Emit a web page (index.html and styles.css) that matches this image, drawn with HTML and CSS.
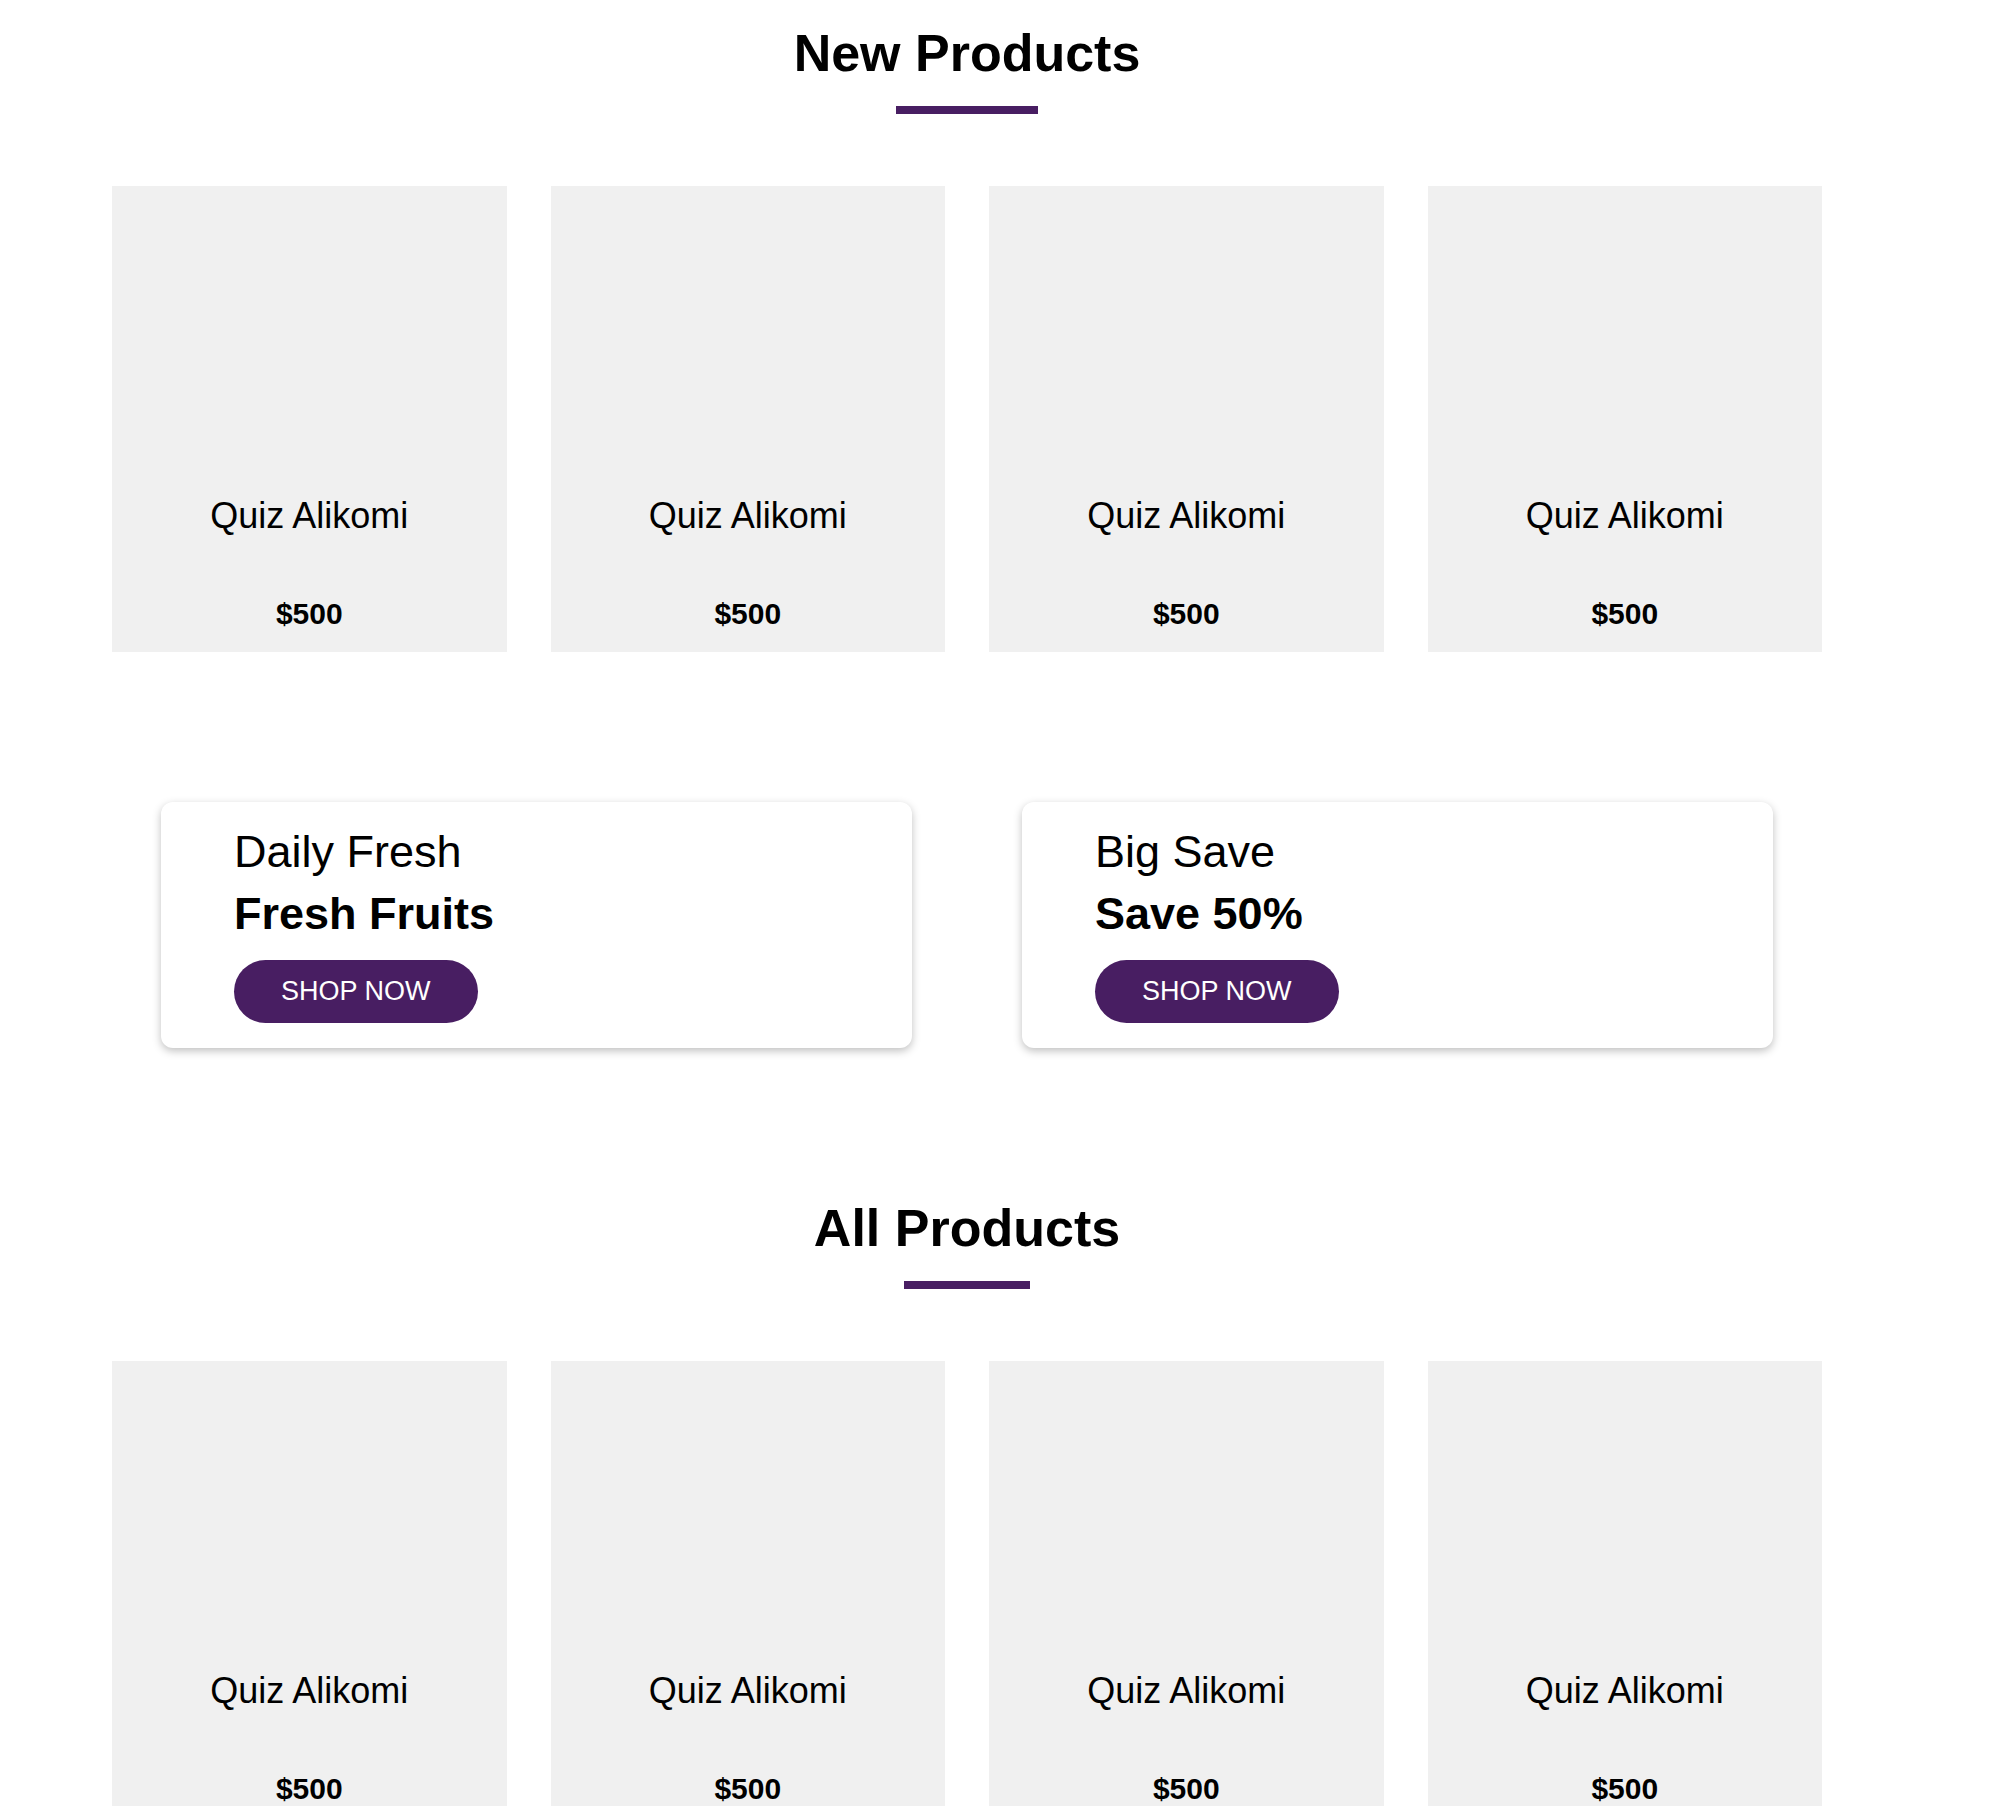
FILE: index.html
```html
<!DOCTYPE html>
<html lang="en">
<head>
<meta charset="utf-8">
<title>Products</title>
<link rel="stylesheet" href="styles.css">
</head>
<body>
<main class="page">
  <section class="section section-new">
    <div class="section-head"><h2 class="section-title">New Products</h2></div>
    <div class="products">
      <article class="product"><div class="product-img"></div><h3 class="product-name">Quiz Alikomi</h3><p class="product-price">$500</p></article>
      <article class="product"><div class="product-img"></div><h3 class="product-name">Quiz Alikomi</h3><p class="product-price">$500</p></article>
      <article class="product"><div class="product-img"></div><h3 class="product-name">Quiz Alikomi</h3><p class="product-price">$500</p></article>
      <article class="product"><div class="product-img"></div><h3 class="product-name">Quiz Alikomi</h3><p class="product-price">$500</p></article>
    </div>
  </section>

  <section class="promos">
    <div class="promo">
      <p class="promo-kicker">Daily Fresh</p>
      <p class="promo-title">Fresh Fruits</p>
      <a class="btn" href="#">Shop Now</a>
    </div>
    <div class="promo">
      <p class="promo-kicker">Big Save</p>
      <p class="promo-title">Save 50%</p>
      <a class="btn" href="#">Shop Now</a>
    </div>
  </section>

  <section class="section section-all">
    <div class="section-head"><h2 class="section-title">All Products</h2></div>
    <div class="products">
      <article class="product"><div class="product-img"></div><h3 class="product-name">Quiz Alikomi</h3><p class="product-price">$500</p></article>
      <article class="product"><div class="product-img"></div><h3 class="product-name">Quiz Alikomi</h3><p class="product-price">$500</p></article>
      <article class="product"><div class="product-img"></div><h3 class="product-name">Quiz Alikomi</h3><p class="product-price">$500</p></article>
      <article class="product"><div class="product-img"></div><h3 class="product-name">Quiz Alikomi</h3><p class="product-price">$500</p></article>
    </div>
  </section>
</main>
</body>
</html>
```

FILE: styles.css
```css
* {
  box-sizing: border-box;
}

body {
  margin: 0;
  background: #ffffff;
  color: #000000;
  font-family: "Liberation Sans", Arial, Helvetica, sans-serif;
}

.page {
  width: 1934px;
}

.section-new {
  padding-top: 23px;
}

.section-all {
  margin-top: 150px;
}

.section-head {
  text-align: center;
}

.section-title {
  display: inline-block;
  margin: 0;
  font-size: 52px;
  line-height: 60px;
  font-weight: 700;
}

.section-title::after {
  content: "";
  display: block;
  width: 41%;
  height: 8px;
  margin: 23px auto 0;
  background: #481e62;
}

.products {
  display: flex;
  gap: 44px;
  padding: 0 112px;
  margin-top: 72px;
}

.product {
  flex: 1;
  height: 466px;
  background: #f0f0f0;
  display: flex;
  flex-direction: column;
  align-items: center;
}

.product-img {
  height: 310px;
  width: 100%;
}

.product-name {
  margin: 0;
  font-size: 36px;
  line-height: 40px;
  font-weight: 400;
}

.product-price {
  margin: 61px 0 0;
  font-size: 30px;
  line-height: 34px;
  font-weight: 700;
}

.promos {
  display: flex;
  gap: 110px;
  padding: 0 161px;
  margin-top: 150px;
}

.promo {
  flex: 1;
  background: #ffffff;
  border-radius: 12px;
  box-shadow: 0 3px 8px rgba(0, 0, 0, 0.25);
  padding: 19px 74px 25px 73px;
}

.promo-kicker,
.promo-title {
  margin: 0;
  font-size: 45px;
  line-height: 62px;
}

.promo-kicker {
  font-weight: 400;
}

.promo-title {
  font-weight: 700;
}

.btn {
  display: inline-block;
  margin-top: 15px;
  padding: 16px 47px;
  background: #481e62;
  color: #ffffff;
  border-radius: 32px;
  font-size: 27px;
  line-height: 31px;
  text-transform: uppercase;
  text-decoration: none;
}
```
